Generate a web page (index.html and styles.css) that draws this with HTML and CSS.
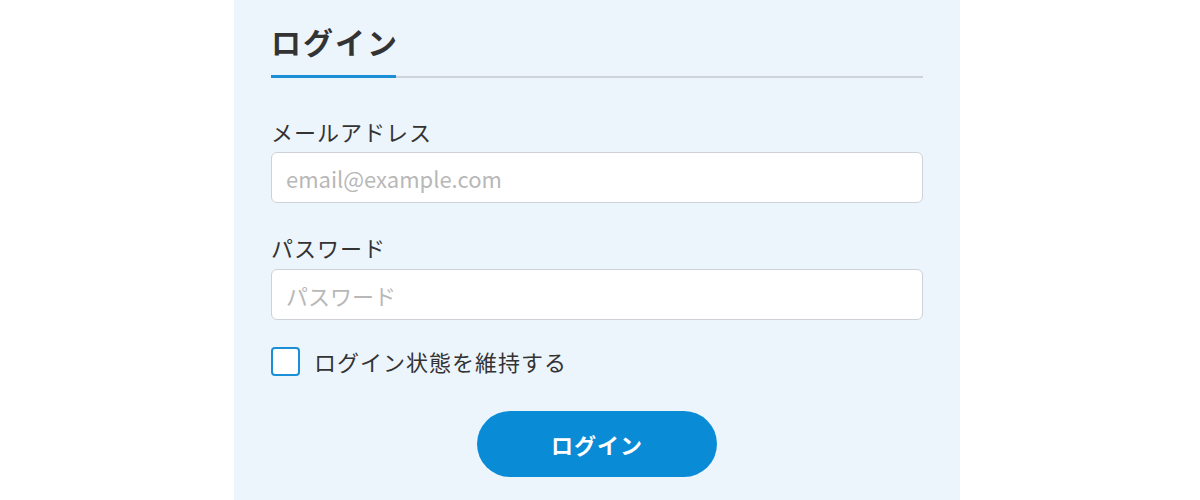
FILE: index.html
```html
<!DOCTYPE html>
<html lang="ja">
<head>
  <meta charset="UTF-8" />
  <meta name="viewport" content="width=device-width, initial-scale=1.0" />
  <title>ログイン</title>
  <link rel="stylesheet" href="styles.css">
</head>
<body>
  <div class="login-panel">
    <div class="title-bar">
      <h1 class="title">ログイン</h1>
    </div>
    <form class="login-form">
      <div class="field">
        <label for="email" class="field-label">メールアドレス</label>
        <input type="email" id="email" class="text-input" placeholder="email@example.com" />
      </div>
      <div class="field">
        <label for="password" class="field-label">パスワード</label>
        <input type="password" id="password" class="text-input" placeholder="パスワード" />
      </div>
      <label class="remember">
        <input type="checkbox" class="remember-check" />
        <span class="remember-text">ログイン状態を維持する</span>
      </label>
      <div class="button-row">
        <button type="button" class="login-button">ログイン</button>
      </div>
    </form>
  </div>
</body>
</html>
```

FILE: styles.css
```css
* {
  margin: 0;
  padding: 0;
  box-sizing: border-box;
}
body, html {
  height: 100%;
  width: 100%;
  background-color: #ffffff;
  font-family: "Noto Sans CJK JP", "Noto Sans", sans-serif;
  color: #333333;
  overflow: hidden;
}
.login-panel {
  width: 726px;
  min-height: 100%;
  margin-left: 234px;
  background-color: #edf5fc;
  padding: 21px 37px 0;
}
.title-bar {
  display: flex;
  border-bottom: 2px solid #cdd3d9;
}
.title {
  width: 125px;
  font-size: 30px;
  font-weight: bold;
  letter-spacing: 2px;
  line-height: 40px;
  padding-bottom: 14px;
  margin-bottom: -2px;
  border-bottom: 3px solid #1a8fd8;
  color: #333333;
  white-space: nowrap;
}
.login-form {
  display: flex;
  flex-direction: column;
  padding-top: 38px;
}
.field {
  display: flex;
  flex-direction: column;
  gap: 6px;
  margin-bottom: 29px;
}
.field + .field {
  gap: 7px;
  margin-bottom: 26px;
}
.field-label {
  font-size: 22px;
  letter-spacing: 1px;
  line-height: 30px;
  color: #333333;
}
.text-input {
  width: 100%;
  height: 51px;
  border: 1px solid #cfd2d6;
  border-radius: 6px;
  background: #ffffff;
  padding: 0 14px;
  font-family: "Noto Sans CJK JP", "Noto Sans", sans-serif;
  font-size: 22px;
  color: #333333;
  outline: none;
}
.text-input::placeholder {
  color: #b8b8b8;
}
.remember {
  display: flex;
  align-items: center;
  gap: 14px;
  cursor: pointer;
}
.remember-check {
  appearance: none;
  width: 29px;
  height: 29px;
  border: 2px solid #1a8fd8;
  border-radius: 4px;
  background: #ffffff;
  margin: 0;
}
.remember-text {
  font-size: 22px;
  letter-spacing: 1px;
  line-height: 30px;
  color: #333333;
}
.button-row {
  display: flex;
  justify-content: center;
  padding-top: 35px;
}
.login-button {
  width: 240px;
  height: 66px;
  border: none;
  border-radius: 33px;
  background-color: #0a8bd6;
  color: #ffffff;
  font-family: "Noto Sans CJK JP", "Noto Sans", sans-serif;
  font-size: 22px;
  font-weight: bold;
  letter-spacing: 1px;
  cursor: pointer;
}
.login-button:hover {
  background-color: #0879bd;
}
```
